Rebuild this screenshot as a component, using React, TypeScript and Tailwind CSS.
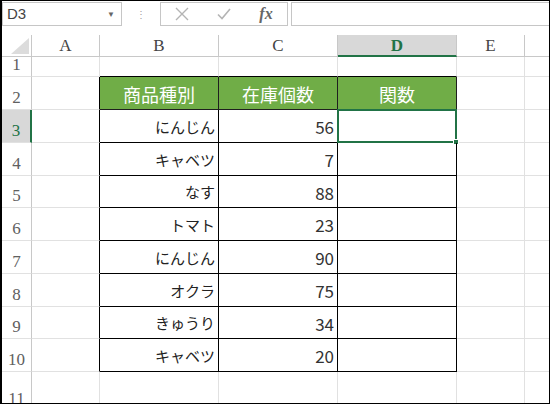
import React from "react";

const data: [string, string][] = [
  ["にんじん", "56"],
  ["キャベツ", "7"],
  ["なす", "88"],
  ["トマト", "23"],
  ["にんじん", "90"],
  ["オクラ", "75"],
  ["きゅうり", "34"],
  ["キャベツ", "20"],
];

const rowHeights = [33, 33, 33, 32, 33, 33, 33, 32, 33];

const jp = { fontFamily: '"Noto Sans CJK JP", "Noto Sans", sans-serif' };
const serif = { fontFamily: '"Liberation Serif", "DejaVu Serif", serif' };

function RowHead({ n, h, sel }: { n: number; h: number; sel?: boolean }) {
  return (
    <div
      className={`w-[30px] shrink-0 flex items-end justify-center pb-[1px] border-b border-[#e1e1e1] text-[17px] leading-none ${
        sel ? "bg-[#d8d8d8] text-[#217346] border-r-2 border-r-[#217346]" : "bg-white text-[#606060] border-r border-r-[#c8c8c8]"
      }`}
      style={{ height: h, ...serif }}
    >
      <span className="pb-[2px]">{n}</span>
    </div>
  );
}

export default function App() {
  return (
    <div className="w-[550px] h-[404px] bg-white border border-black border-l-2 overflow-hidden flex flex-col">
      {/* formula bar */}
      <div className="h-[34px] shrink-0 flex items-start pt-[1px]">
        <div className="w-[120px] h-[24px] border border-[#c6c6c6] flex items-center justify-between px-[4px]">
          <span className="text-[15px] text-[#444]" style={{ fontFamily: '"Liberation Sans", sans-serif' }}>D3</span>
          <span className="text-[8px] text-[#666] mr-[2px]">▼</span>
        </div>
        <div className="w-[38px] h-[24px] flex items-center justify-center text-[#a0a0a0] text-[10px] leading-none">⋮</div>
        <div className="w-[128px] h-[24px] border border-[#c6c6c6] flex items-center">
          <div className="w-[42px] flex justify-center">
            <svg width="16" height="16" viewBox="0 0 16 16"><path d="M2 2 L14 14 M14 2 L2 14" stroke="#b4b4b4" strokeWidth="1.4" fill="none" /></svg>
          </div>
          <div className="w-[42px] flex justify-center">
            <svg width="16" height="16" viewBox="0 0 16 16"><path d="M2 8.5 L6 12.5 L14 3" stroke="#b4b4b4" strokeWidth="1.6" fill="none" /></svg>
          </div>
          <div className="flex-1 flex justify-center text-[16px] italic font-bold text-[#666]" style={serif}>fx</div>
        </div>
        <div className="ml-[3px] flex-1 h-[24px] border border-[#c6c6c6] border-r-0" />
      </div>

      {/* column header */}
      <div className="h-[22px] shrink-0 flex text-[17px] leading-none" style={serif}>
        <div className="w-[30px] shrink-0 border-r border-b border-[#c8c8c8] relative bg-white">
          <svg className="absolute right-[2px] bottom-[2px]" width="18" height="16" viewBox="0 0 18 16"><polygon points="18,0 18,16 0,16" fill="#dcdcdc" /></svg>
        </div>
        <div className="w-[68px] shrink-0 border-r border-b border-[#c8c8c8] flex items-end justify-center pb-[2px] text-[#444]">A</div>
        <div className="w-[119px] shrink-0 border-r border-b border-[#c8c8c8] flex items-end justify-center pb-[2px] text-[#444]">B</div>
        <div className="w-[119px] shrink-0 border-r border-b border-[#c8c8c8] flex items-end justify-center pb-[2px] text-[#444]">C</div>
        <div className="w-[119px] shrink-0 border-r border-[#c8c8c8] border-b-2 border-b-[#217346] bg-[#d8d8d8] flex items-end justify-center pb-[1px] text-[#217346] font-bold">D</div>
        <div className="w-[68px] shrink-0 border-r border-b border-[#c8c8c8] flex items-end justify-center pb-[2px] text-[#444]">E</div>
        <div className="flex-1 border-b border-[#c8c8c8]" />
      </div>

      {/* row 1 */}
      <div className="h-[20px] shrink-0 flex">
        <RowHead n={1} h={20} />
        <div className="w-[68px] shrink-0 border-r border-b border-[#e1e1e1]" />
        <div className="w-[119px] shrink-0 border-r border-[#e1e1e1] border-b border-b-black" />
        <div className="w-[119px] shrink-0 border-r border-[#e1e1e1] border-b border-b-black" />
        <div className="w-[119px] shrink-0 border-r border-[#e1e1e1] border-b border-b-black" />
        <div className="w-[68px] shrink-0 border-r border-b border-[#e1e1e1]" />
        <div className="flex-1 border-b border-[#e1e1e1]" />
      </div>

      {/* row 2 header */}
      <div className="shrink-0 flex" style={{ height: rowHeights[0] }}>
        <RowHead n={2} h={rowHeights[0]} />
        <div className="w-[68px] shrink-0 border-r border-r-black border-b border-[#e1e1e1]" />
        {["商品種別", "在庫個数", "関数"].map((t) => (
          <div
            key={t}
            className="w-[119px] shrink-0 bg-[#70ad47] border-r border-b border-[#1f1f1f] flex items-center justify-center pt-[2px] text-white text-[18px]"
            style={jp}
          >
            {t}
          </div>
        ))}
        <div className="w-[68px] shrink-0 border-r border-b border-[#e1e1e1]" />
        <div className="flex-1 border-b border-[#e1e1e1]" />
      </div>

      {/* data rows */}
      {data.map(([name, qty], i) => {
        const h = rowHeights[i + 1];
        return (
          <div key={i} className="shrink-0 flex" style={{ height: h }}>
            <RowHead n={i + 3} h={h} sel={i === 0} />
            <div className="w-[68px] shrink-0 border-r border-r-black border-b border-[#e1e1e1]" />
            <div className="w-[119px] shrink-0 border-r border-b border-black flex items-center justify-end pr-[3px] pt-[2px] text-[15px] text-[#222]" style={jp}>
              {name}
            </div>
            <div className="w-[119px] shrink-0 border-r border-b border-black flex items-center justify-end pr-[3px] pt-[2px] text-[17px] text-[#333]" style={jp}>
              {qty}
            </div>
            <div className="w-[119px] shrink-0 border-r border-b border-black relative">
              {i === 0 && (
                <div className="absolute -left-[1px] -top-[1px] -right-[1px] -bottom-[1px] border-2 border-[#217346]">
                  <div className="absolute -right-[4px] -bottom-[4px] w-[6px] h-[6px] bg-[#217346] border border-white" />
                </div>
              )}
            </div>
            <div className="w-[68px] shrink-0 border-r border-b border-[#e1e1e1]" />
            <div className="flex-1 border-b border-[#e1e1e1]" />
          </div>
        );
      })}

      {/* row 11 */}
      <div className="flex-1 flex">
        <div className="w-[30px] shrink-0 border-r border-[#c8c8c8] flex justify-center pt-[18px] text-[17px] leading-none text-[#606060]" style={serif}>
          11
        </div>
        <div className="w-[68px] shrink-0 border-r border-[#e1e1e1]" />
        <div className="w-[119px] shrink-0 border-r border-[#e1e1e1]" />
        <div className="w-[119px] shrink-0 border-r border-[#e1e1e1]" />
        <div className="w-[119px] shrink-0 border-r border-[#e1e1e1]" />
        <div className="w-[68px] shrink-0 border-r border-[#e1e1e1]" />
        <div className="flex-1" />
      </div>
    </div>
  );
}
